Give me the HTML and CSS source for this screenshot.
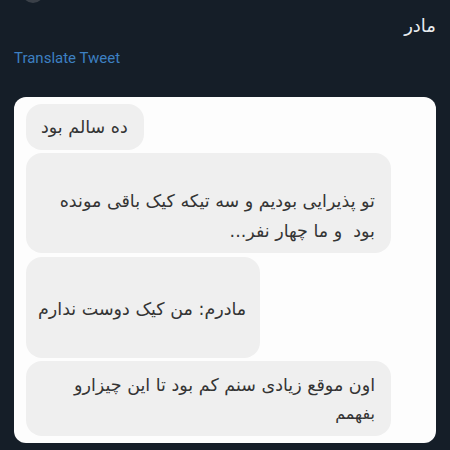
FILE: index.html
```html
<!DOCTYPE html>
<html lang="fa">
<head>
<meta charset="utf-8">
<link rel="stylesheet" href="styles.css">
</head>
<body>
<div class="page">
  <div class="avatar"></div>
  <p class="tweet" dir="rtl">مادر</p>
  <a class="translate">Translate Tweet</a>
  <div class="card">
    <div class="bubble b1" dir="rtl">ده سالم بود</div>
    <div class="bubble b2" dir="rtl">تو پذیرایی بودیم و سه تیکه کیک باقی مونده<br>بود&nbsp; و ما چهار نفر...</div>
    <div class="bubble b3" dir="rtl">مادرم: من کیک دوست ندارم</div>
    <div class="bubble b4" dir="rtl">اون موقع زیادی سنم کم بود تا این چیزارو<br><span class="small">بفهمم</span></div>
  </div>
</div>
</body>
</html>
```
FILE: styles.css
```css
html, body {
  margin: 0;
  padding: 0;
  background: #151e28;
}
.page {
  width: 450px;
  height: 450px;
  overflow: hidden;
  padding: 0 14px;
  box-sizing: border-box;
  display: flex;
  flex-direction: column;
}
.page > * {
  flex-shrink: 0;
}
.avatar {
  width: 22px;
  height: 22px;
  margin: -19px 0 0 8px;
  border-radius: 50%;
  background: #3a4048;
}
.tweet {
  margin: 11px 0 0;
  color: #e8ecef;
  font-family: "DejaVu Sans", sans-serif;
  font-size: 18px;
  line-height: 24px;
  text-align: right;
}
.translate {
  margin-top: 10px;
  color: #3d80c2;
  font-family: Roboto, "Liberation Sans", sans-serif;
  font-size: 15px;
  line-height: 20px;
}
.card {
  margin-top: 29px;
  background: #fdfdfd;
  border-radius: 12px;
  padding: 7px 12px 7px 12px;
  display: flex;
  flex-direction: column;
  align-items: flex-start;
  gap: 3px;
}
.bubble {
  background: #efefef;
  border-radius: 16px;
  color: #343434;
  font-family: "DejaVu Sans", sans-serif;
  font-size: 17.5px;
  line-height: 30px;
  text-align: right;
  box-sizing: border-box;
  white-space: nowrap;
}
.b1 {
  padding: 8px 16px 8px 15px;
}
.b2 {
  width: 365px;
  padding: 33px 16px 7px 16px;
}
.b3 {
  margin-top: 1px;
  padding: 37px 14px 34px 12px;
}
.b4 {
  width: 365px;
  padding: 10px 16px 8px 16px;
  line-height: 28px;
}
.small {
  font-size: 16px;
}
```
